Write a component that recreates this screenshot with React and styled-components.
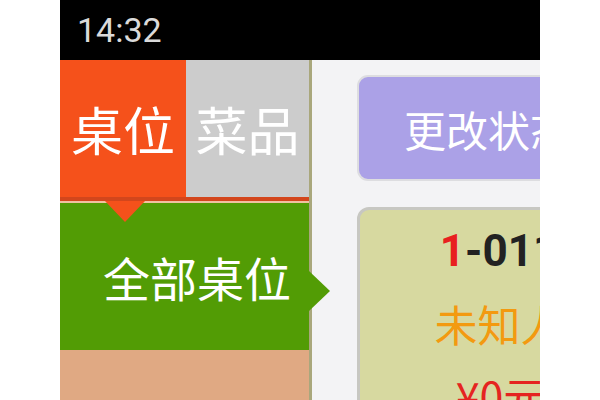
import React from 'react';
import styled, { createGlobalStyle } from 'styled-components';

const GlobalStyle = createGlobalStyle`
  html, body {
    margin: 0;
    padding: 0;
    background: #ffffff;
  }
  body {
    font-family: Roboto, "Noto Sans CJK SC", sans-serif;
  }
`

const Phone = styled.div`
  width: 480px;
  height: 400px;
  margin: 0 auto;
  display: flex;
  flex-direction: column;
  overflow: hidden;
`

const StatusBar = styled.div`
  height: 60px;
  flex-shrink: 0;
  background: #000;
  color: #dadada;
  display: flex;
  align-items: center;
  padding-left: 17px;
  font-size: 34px;
`

const Main = styled.div`
  flex: 1;
  display: flex;
  min-height: 0;
`

const Sidebar = styled.div`
  width: 249px;
  flex-shrink: 0;
  display: flex;
  flex-direction: column;
  border-right: 3px solid #a9a77c;
  position: relative;
  z-index: 1;
`

const Tabs = styled.div`
  display: flex;
  height: 137px;
  border-bottom: 4px solid #d3461c;
  font-family: "Noto Sans CJK SC", sans-serif;
`

const Tab = styled.div`
  flex: ${p => p.active ? '0 0 126px' : '1'};
  background: ${p => p.active ? '#f5511b' : '#cccccc'};
  color: #fff;
  font-size: 52px;
  display: flex;
  align-items: center;
  justify-content: center;
  position: relative;
  z-index: ${p => p.active ? 2 : 1};
`

const DownPointer = styled.span`
  position: absolute;
  left: 45px;
  bottom: -25px;
  width: 0;
  height: 0;
  border-left: 20px solid transparent;
  border-right: 20px solid transparent;
  border-top: 21px solid #f5511b;
`

const Group = styled.div`
  height: 147px;
  border-top: 2px solid #f1c2a0;
  background: #529c05;
  color: #fff;
  font-family: "Noto Sans CJK SC", sans-serif;
  font-size: 47px;
  display: flex;
  align-items: center;
  padding-left: 43px;
  position: relative;
`

const SideArrow = styled.span`
  position: absolute;
  left: 100%;
  top: 68px;
  width: 0;
  height: 0;
  border-top: 20px solid transparent;
  border-bottom: 20px solid transparent;
  border-left: 21px solid #529c05;
`

const Other = styled.div`
  flex: 1;
  background: #e0a983;
`

const Content = styled.div`
  flex: 1;
  min-width: 0;
  background: #f3f3f5;
  padding: 15px 0 0 45px;
  display: flex;
  flex-direction: column;
  align-items: flex-start;
  overflow: hidden;
  font-family: "Noto Sans CJK SC", sans-serif;
`

const StatusButton = styled.div`
  flex-shrink: 0;
  box-sizing: border-box;
  width: 262px;
  height: 106px;
  border: 2px solid #dddde0;
  border-radius: 11px;
  background: #aba1e7;
  color: #fff;
  font-size: 42px;
  display: flex;
  align-items: center;
  justify-content: center;
  white-space: nowrap;
`

const TableCard = styled.div`
  flex-shrink: 0;
  box-sizing: border-box;
  width: 284px;
  margin-top: 26px;
  padding-top: 5px;
  border: 3px solid #c7c7c2;
  border-radius: 12px;
  background: #d7d9a0;
  text-align: center;
  white-space: nowrap;
`

const TableNo = styled.div`
  font-family: Roboto, "Noto Sans CJK SC", sans-serif;
  font-weight: bold;
  font-size: 44px;
  line-height: 72px;
  color: #222;
`

const Zone = styled.span`
  color: #e8201f;
`

const Guest = styled.div`
  font-size: 43px;
  line-height: 72px;
  color: #f39a10;
`

const Price = styled.div`
  font-size: 43px;
  line-height: 72px;
  color: #e52420;
  padding-left: 4px;
`

export default function App() {
  return (
    <>
      <GlobalStyle />
      <Phone>
        <StatusBar>14:32</StatusBar>
        <Main>
          <Sidebar>
            <Tabs>
              <Tab active>
                桌位
                <DownPointer />
              </Tab>
              <Tab>菜品</Tab>
            </Tabs>
            <Group>
              全部桌位
              <SideArrow />
            </Group>
            <Other />
          </Sidebar>
          <Content>
            <StatusButton>更改状态</StatusButton>
            <TableCard>
              <TableNo><Zone>1</Zone>-011</TableNo>
              <Guest>未知人</Guest>
              <Price>¥0元</Price>
            </TableCard>
          </Content>
        </Main>
      </Phone>
    </>
  )
}
